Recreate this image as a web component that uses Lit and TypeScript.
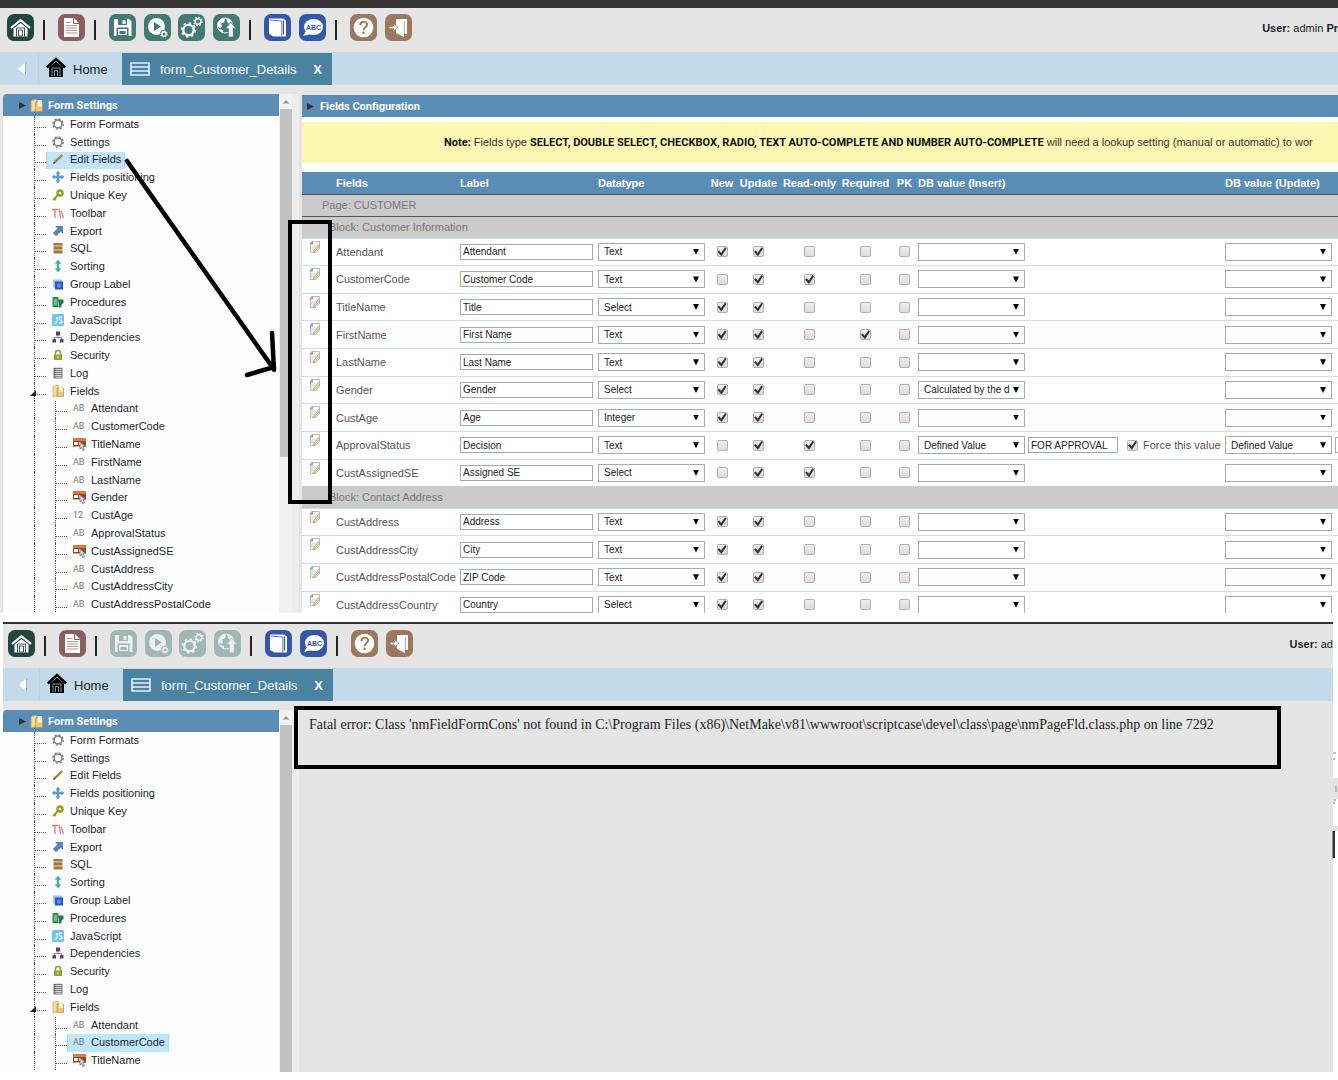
import { LitElement, html, css, svg, nothing } from "lit";
import { customElement, property } from "lit/decorators.js";
import { classMap } from "lit/directives/class-map.js";

const ROW_PITCH = 17.78;

/* ---------- toolbar glyphs, drawn on a 27 x 27 tile ---------- */
const toolGlyphs: Record<string, unknown> = {
  home: svg`<path d="M4 14 13.500 6.200 23 14" fill="none" stroke="#fff" stroke-width="2.200"/>
    <path d="M6.500 14.500 13.500 9 20.500 14.500V22.500h-14z" fill="#fff"/>
    <path d="M9.500 22.500v-8.500h8v8.500M11.500 22v-6h4v6z" fill="none" stroke="#24463f" stroke-width=".9"/>`,
  page: svg`<path d="M6 4h10l5 5v14H6z" fill="#fff"/><path d="M15.500 4v5.500H21" fill="none" stroke="#8a5f60"/>
    <path d="M8 11.500h11M8 14h11M8 16.500h11M8 19h11M8 8.500h5" stroke="#b98f8f" stroke-width="1"/>`,
  save: svg`<path d="M5 5h15l2.500 2.500V22H5z" fill="#fff"/><path d="M9 5h9v6H9z" fill="#437a73"/><path d="M13.500 6h3v4h-3z" fill="#fff"/>
    <path d="M7.500 13.500h12V22h-12z" fill="#437a73"/><path d="M9 15h9v6H9z" fill="#fff"/><path d="M10.500 17h6v3h-6z" fill="#437a73"/>`,
  run: svg`<circle cx="12.500" cy="12.500" r="8.500" fill="#fff"/><path d="M10 8v9l7-4.500z" fill="#437a73"/>
    <circle cx="20" cy="20" r="4.200" fill="#437a73"/><circle cx="20" cy="20" r="2.200" fill="none" stroke="#fff" stroke-width="1.400"/>
    <circle cx="20" cy="20" r="3.200" fill="none" stroke="#fff" stroke-width="1" stroke-dasharray="1.200 1.300"/>`,
  gears: svg`<circle cx="10.500" cy="16" r="5.200" fill="none" stroke="#fff" stroke-width="2.200"/>
    <circle cx="10.500" cy="16" r="6.900" fill="none" stroke="#fff" stroke-width="1.600" stroke-dasharray="2.600 2.820"/>
    <circle cx="20" cy="7.500" r="2.800" fill="none" stroke="#fff" stroke-width="1.500"/>
    <circle cx="20" cy="7.500" r="4.100" fill="none" stroke="#fff" stroke-width="1.200" stroke-dasharray="1.600 1.620"/>`,
  publish: svg`<circle cx="12" cy="11.500" r="7.500" fill="none" stroke="#fff" stroke-width="1"/>
    <path d="M5 9l4-4.500 3 1-1 3-3 1 1 3-2 2-2-2zM13 4l5 2 1.500 4-3 .5-2-2zM6 15l4 1v3.500z" fill="#fff"/>
    <path d="M17.800 8l5.200 6.500h-2.700V23h-5v-8.500h-2.700z" fill="#fff" stroke="#437a73" stroke-width=".8"/>`,
  book: svg`<path d="M5 4.500h14l3 2v16H9.500L5 20z" fill="#fff"/><path d="M19.500 6.500v14" stroke="#3c5aa4" stroke-width="1.200"/>
    <path d="M5.500 6 17.800 7v15.500" fill="none" stroke="#3c5aa4" stroke-width=".8"/>`,
  abc: svg`<ellipse cx="14.500" cy="13" rx="9.500" ry="8" fill="#fff"/><path d="M7 17 4 22l8-2z" fill="#fff"/>
    <text x="14.500" y="16" text-anchor="middle" font-size="7" font-weight="700" font-family="Liberation Sans, Arial, sans-serif" fill="#3c5aa4">ABC</text>`,
  help: svg`<circle cx="13.500" cy="13.500" r="9.800" fill="#fff"/>
    <path d="M10.300 11.200c0-4.600 6.700-4.600 6.700-.6 0 2.600-3.300 2.500-3.300 5.600" fill="none" stroke="#9c7860" stroke-width="1.900"/><circle cx="13.600" cy="18.800" r="1.200" fill="#9c7860"/>`,
  exit: svg`<path d="M11 9V5h11v15h-3" fill="#fff"/><path d="M11 5l8 3v15l-8-4z" fill="#fff"/><path d="M19.300 7v14" stroke="#9c7860" stroke-width=".7"/>
    <path d="M4 12.300h4.500V9.500l4.500 4-4.500 4v-2.800H4z" fill="#fff" stroke="#9c7860" stroke-width=".8"/>`,
};

interface Tool { glyph: string; label: string; tone: string; dims?: boolean }
const toolGroups: Tool[][] = [
  [{ glyph: "home", label: "Home", tone: "dark" }],
  [{ glyph: "page", label: "New application", tone: "red" }],
  [
    { glyph: "save", label: "Save", tone: "green", dims: true },
    { glyph: "run", label: "Run", tone: "green", dims: true },
    { glyph: "gears", label: "Generate", tone: "green", dims: true },
    { glyph: "publish", label: "Publish", tone: "green", dims: true },
  ],
  [
    { glyph: "book", label: "Manual", tone: "blue" },
    { glyph: "abc", label: "Dictionary", tone: "blue" },
  ],
  [
    { glyph: "help", label: "Help", tone: "brown" },
    { glyph: "exit", label: "Exit", tone: "brown" },
  ],
];

/* ---------- tree glyphs, drawn on a 12 x 12 tile ---------- */
const gear = svg`<circle cx="6" cy="6" r="4" fill="none" stroke="#777" stroke-width="1.500"/>
  <circle cx="6" cy="6" r="5.200" fill="none" stroke="#777" stroke-width="1.300" stroke-dasharray="2 2.080"/>`;
const folder = svg`<path d="M1 1.500 6 0v10.500L1 12z" fill="#f4dfa0" stroke="#c4a565" stroke-width=".7"/>
  <path d="M5 3h6.500v8.500H5z" fill="#e9c777" stroke="#b8924b" stroke-width=".7"/><path d="M7 1h4v6H7z" fill="#faf0cd"/>`;
const treeGlyphs: Record<string, unknown> = {
  gear,
  folder,
  pencil: svg`<path d="M1 11l1.200-3L9.500 1.200 11 2.700 4 9.800z" fill="#a98243"/><path d="M1 11l1-2.500L3.500 10z" fill="#444"/>`,
  move: svg`<path d="M6 0l2 2.500H7V5h2.500V4L12 6 9.500 8V7H7v2.500h1L6 12 4 9.500h1V7H2.500v1L0 6l2.500-2v1H5V2.500H4z" fill="#5f9ac4" stroke="#5f9ac4" stroke-width=".5"/>`,
  key: svg`<circle cx="8" cy="4" r="2.500" fill="none" stroke="#9a9a22" stroke-width="2.400"/><path d="M6 6 1 11M2.500 9.500 4 11" stroke="#9a9a22" stroke-width="1.800"/>`,
  tools: svg`<path d="M0 2.500h6M3 2.500V11M7 1.500l1.500 9.500M9 4l2.500 7" fill="none" stroke="#dd7f7f" stroke-width="1.300"/>`,
  export: svg`<path d="M3 1h8v8L8.500 6.800 4 11.200.8 8 5.300 3.500z" fill="#5487b8"/>`,
  sql: svg`<path d="M1.500 1h9v2.500h-9zM1.500 5h9v2.500h-9zM1.500 9h9v2.500h-9z" fill="#a4763d"/><path d="M1.500 3.500h9V5h-9zM1.500 7.500h9V9h-9z" fill="#c9a36f"/>`,
  sort: svg`<path d="M6 0l3 3.500H7v5h2L6 12 3 8.500h2v-5H3z" fill="#35b2a8" stroke="#35b2a8" stroke-width=".4"/>`,
  group: svg`<path d="M1 1.500h9v8H1z" fill="#a8c3ee"/><path d="M3 3.500h8v8H3z" fill="#2458c6"/><path d="M5 5.500h4v4H5z" fill="#5a8cf0"/>`,
  proc: svg`<path d="M.5 1h6v10h-6z" fill="#2f8f5c"/><path d="M2 4h3M2 6h3M2 8h3" stroke="#bfe3cf"/><path d="M6 3.500h5.500V7L9.500 8.500V11.500H7V7z" fill="#24774b"/>`,
  js: svg`<rect width="12" height="12" rx="1.500" fill="#6fc7ec"/><path d="M5 3v5q0 1.500-2.500 1M10 3.500q-3-1-3 .8 0 1.200 1.500 1.500Q10 6.200 10 7.700q0 1.600-3.200.9" fill="none" stroke="#fff" stroke-width="1.200"/>`,
  deps: svg`<path d="M4 .5h4v4H4zM.5 8h3.500v3.500H.5zM8 8h3.500v3.500H8z" fill="#5c3f6d"/><path d="M6 4v2.500M2.300 8.500V6.500h7.400v2" fill="none" stroke="#8a7a96"/>`,
  lock: svg`<path d="M3.500 6V4a2.500 2.500 0 0 1 5 0v2" fill="none" stroke="#86a834" stroke-width="1.500"/><path d="M2 5.500h8V11H2z" fill="#86a834"/><path d="M6 7v2.500" stroke="#fff"/>`,
  log: svg`<path d="M1.500.8h9v10.700h-9z" fill="#777"/><path d="M3.500 2.500h6M3.500 4.500h6M3.500 6.500h6M3.500 8.500h6M3.500 10.200h6" stroke="#ddd" stroke-width="1"/>`,
  select: svg`<path d="M0 0h13V8.500H0z" fill="#8d4a26"/><path d="M0 0h13V3H0z" fill="#e07a35"/><path d="M1 4h4v3H1zM6 4h2v3H6z" fill="#fff"/><path d="M7 4l5.500 4.500H10l1.500 3.500-1.800.5L8.500 9.500 7 11z" fill="#ddd" stroke="#666" stroke-width=".7"/>`,
};

interface Node { text: string; icon: string; deep?: boolean }
const settings: Node[] = [
  { text: "Form Formats", icon: "gear" },
  { text: "Settings", icon: "gear" },
  { text: "Edit Fields", icon: "pencil" },
  { text: "Fields positioning", icon: "move" },
  { text: "Unique Key", icon: "key" },
  { text: "Toolbar", icon: "tools" },
  { text: "Export", icon: "export" },
  { text: "SQL", icon: "sql" },
  { text: "Sorting", icon: "sort" },
  { text: "Group Label", icon: "group" },
  { text: "Procedures", icon: "proc" },
  { text: "JavaScript", icon: "js" },
  { text: "Dependencies", icon: "deps" },
  { text: "Security", icon: "lock" },
  { text: "Log", icon: "log" },
  { text: "Fields", icon: "folder" },
];
const fieldNodes: Node[] = (
  [
    ["Attendant", "AB"], ["CustomerCode", "AB"], ["TitleName", "select"], ["FirstName", "AB"],
    ["LastName", "AB"], ["Gender", "select"], ["CustAge", "12"], ["ApprovalStatus", "AB"],
    ["CustAssignedSE", "select"], ["CustAddress", "AB"], ["CustAddressCity", "AB"], ["CustAddressPostalCode", "AB"],
  ] as [string, string][]
).map(([text, icon]) => ({ text, icon, deep: true }));

/* ---------- field rows: name, label, datatype, ticks, insert value, update value ---------- */
interface Field { name: string; label: string; type: string; ticks: string; insert?: string; update?: string; value?: string }
const customerFields: Field[] = [
  { name: "Attendant", label: "Attendant", type: "Text", ticks: "11000" },
  { name: "CustomerCode", label: "Customer Code", type: "Text", ticks: "01100" },
  { name: "TitleName", label: "Title", type: "Select", ticks: "11000" },
  { name: "FirstName", label: "First Name", type: "Text", ticks: "11010" },
  { name: "LastName", label: "Last Name", type: "Text", ticks: "11000" },
  { name: "Gender", label: "Gender", type: "Select", ticks: "11000", insert: "Calculated by the d" },
  { name: "CustAge", label: "Age", type: "Integer", ticks: "11000" },
  { name: "ApprovalStatus", label: "Decision", type: "Text", ticks: "01100", insert: "Defined Value", update: "Defined Value", value: "FOR APPROVAL" },
  { name: "CustAssignedSE", label: "Assigned SE", type: "Select", ticks: "01100" },
];
const addressFields: Field[] = [
  { name: "CustAddress", label: "Address", type: "Text", ticks: "11000" },
  { name: "CustAddressCity", label: "City", type: "Text", ticks: "11000" },
  { name: "CustAddressPostalCode", label: "ZIP Code", type: "Text", ticks: "11000" },
  { name: "CustAddressCountry", label: "Country", type: "Select", ticks: "11000" },
];
const tickNames = ["New", "Update", "Read-only", "Required", "PK"];

@customElement("tool-bar")
class ToolBar extends LitElement {
  @property({ type: Boolean }) dimmed = false;
  @property() user = "";
  @property() project = "";

  static styles = css`
    :host { display: flex; flex: none; align-items: center; height: 44px; padding-left: var(--tools-inset); box-sizing: border-box; background: #e5e5e5; overflow: hidden; }
    .group { display: flex; flex: none; justify-content: space-between; padding-bottom: 5px; }
    .wide { width: 131px; }
    .pair { width: 62px; }
    .sep { flex: none; width: 2px; height: 20px; margin: 0 13px 0 9px; background: #222; }
    .tool { flex: none; display: block; width: 27px; height: 27px; margin: 0; padding: 0; border: 0; border-radius: 7px; }
    .tool svg { display: block; width: 27px; height: 27px; }
    .dark { background: #24463f; }
    .red { background: #8a5f60; }
    .green { background: #437a73; }
    .blue { background: #3557a7; }
    .brown { background: #9c7860; }
    .dim { opacity: 0.42; }
    .user { flex: none; margin-left: auto; padding-bottom: 4px; white-space: nowrap; font-size: 11px; color: #222; }
  `;

  render() {
    return html`
      ${toolGroups.map(
        (group, i) => html`
          ${i ? html`<span class="sep"></span>` : nothing}
          <div class=${classMap({ group: true, wide: group.length === 4, pair: group.length === 2 })}>
            ${group.map(
              (t) => html`<button class="tool ${t.tone} ${this.dimmed && t.dims ? "dim" : ""}" aria-label=${t.label} ?disabled=${this.dimmed && !!t.dims}>
                <svg viewBox="0 0 27 27" aria-hidden="true">${toolGlyphs[t.glyph]}</svg>
              </button>`
            )}
          </div>
        `
      )}
      <div class="user"><b>User:</b> ${this.user} <b>${this.project}</b></div>
    `;
  }
}

@customElement("tab-bar")
class TabBar extends LitElement {
  static styles = css`
    :host { display: flex; flex: none; height: 33px; box-sizing: border-box; background: #c3daea; border-top: 1px solid #cdd5da; font-size: 13px; }
    button, a { font: inherit; }
    .back { box-sizing: border-box; width: var(--back-width); padding: 0 12px 0 0; border: 0; border-right: 1px solid #b9d2e3; background: none; }
    .back svg { display: block; width: 12px; height: 14px; margin-left: auto; }
    .tab { display: flex; align-items: center; text-decoration: none; white-space: nowrap; }
    .home { width: 76px; padding-left: 7px; gap: 7px; color: #222; }
    .home svg { width: 20px; height: 20px; margin-bottom: 4px; }
    .active { width: 202px; padding-left: 8px; background: #4a82a1; color: #fff; }
    .active svg { width: 20px; height: 14px; margin-right: 10px; }
    .close { margin-left: auto; padding: 0 10px 0 0; border: 0; background: none; color: #fff; font-weight: 700; }
  `;

  render() {
    return html`
      <button class="back" aria-label="Previous tab">
        <svg viewBox="0 0 12 14"><path d="M11 1v12L4 7z" fill="#fff" /><path d="M11.500 1v12" stroke="#9ab" /></svg>
      </button>
      <a class="tab home" href="#home">
        <svg viewBox="0 0 20 20" aria-hidden="true">
          <path d="M.8 10.500 10 2l9.200 8.500" fill="none" stroke="#000" stroke-width="2.600" />
          <path d="M3 10.500 10 4.500l7 6V20H3z" fill="#000" />
          <path d="M6 19v-8h8v8M8.500 19v-5.500h3V19" fill="none" stroke="#8fa5b3" stroke-width=".9" />
        </svg>
        <span>Home</span>
      </a>
      <div class="tab active">
        <svg viewBox="0 0 20 14" aria-hidden="true"><path d="M1 1h18v12H1zM1 5h18M1 9h18" fill="none" stroke="#e6f0f5" stroke-width="1.600" /></svg>
        <span>form_Customer_Details</span>
        <button class="close" aria-label="Close tab">X</button>
      </div>
    `;
  }
}

@customElement("settings-tree")
class SettingsTree extends LitElement {
  @property() selected = "";
  @property({ type: Number }) depth = 12;
  @property({ type: Boolean }) short = false;

  static styles = css`
    :host { display: flex; flex: none; width: 296px; margin-left: var(--tree-inset); font-size: 11px; color: #251f30; overflow: hidden; }
    .panel { flex: 1; background: #fefefe; overflow: hidden; border-top-left-radius: 4px; }
    .head { display: flex; align-items: center; height: 22px; padding-left: 15px; background: #5a8db6; color: #fff; font-family: Roboto, "Liberation Sans", sans-serif; font-weight: 700; }
    .head .arrow { width: 9px; height: 9px; margin-right: 3px; }
    .head .folder { width: 13px; height: 13px; margin-right: 5px; }
    .list { display: grid; grid-auto-rows: 1fr; margin: 0; padding: 0 0 0 31px; list-style: none; }
    .item { position: relative; display: flex; align-items: center; border-left: 1px dotted #555; }
    .dash { flex: none; width: 11px; margin-top: 5px; border-top: 1px dotted #555; }
    .open { position: absolute; left: -5px; width: 6px; height: 6px; margin-top: 3px; }
    .node { display: flex; align-items: center; height: 100%; box-sizing: border-box; padding: 0 3px 2px 5px; border: 1px solid transparent; border-width: 0 1px; color: inherit; text-decoration: none; white-space: nowrap; }
    .node.on { background: #bee7fb; border-color: #a9d9f0; border-radius: 1px; }
    .icon { width: 12px; height: 12px; margin-right: 6px; flex: none; overflow: visible; }
    .branch { display: flex; height: 100%; align-items: center; margin-left: 20px; border-left: 1px dotted #555; }
    .tag { width: 12px; margin-right: 6px; font-family: Roboto, "Liberation Sans", sans-serif; font-size: 9px; color: #777; }
    .track { flex: none; width: 13px; background: #f1f1f1; display: flex; flex-direction: column; align-items: stretch; padding-left: 1px; box-sizing: border-box; }
    .gutter { flex: none; width: 7px; background: #ededed; }
    .up { height: 15px; flex: none; display: block; }
    .thumb { flex: 1; background: #c1c1c1; }
    .rest { flex: none; height: 30%; }
  `;

  private node(n: Node) {
    const glyph = treeGlyphs[n.icon];
    return html`<a class="node ${n.text === this.selected ? "on" : ""}" href="#${n.text}">
      ${glyph ? html`<svg class="icon" viewBox="0 0 12 12" aria-hidden="true">${glyph}</svg>` : html`<span class="tag">${n.icon}</span>`}
      <span>${n.text}</span>
    </a>`;
  }

  render() {
    const nodes = [...settings, ...fieldNodes.slice(0, this.depth)];
    return html`
      <div class="panel">
        <div class="head">
          <svg class="arrow" viewBox="0 0 9 9"><path d="M1 1v7l7-3.500z" fill="#333" /></svg>
          <svg class="folder" viewBox="0 0 12 12">${folder}</svg>
          <span>Form Settings</span>
        </div>
        <ul class="list" style="height:${Math.round(nodes.length * ROW_PITCH)}px">
          ${nodes.map(
            (n) => html`<li class="item">
              ${n.text === "Fields" ? html`<svg class="open" viewBox="0 0 6 6"><path d="M6 0v6H0z" fill="#222" /></svg>` : nothing}
              ${n.deep ? html`<div class="branch"><span class="dash"></span>${this.node(n)}</div>` : html`<span class="dash"></span>${this.node(n)}`}
            </li>`
          )}
        </ul>
      </div>
      <div class="track">
        <svg class="up" viewBox="0 0 12 15"><path d="M2.500 9.500h7L6 6z" fill="#999" /></svg>
        <div class="thumb"></div>
        ${this.short ? html`<div class="rest"></div>` : nothing}
      </div>
      <div class="gutter"></div>
    `;
  }
}

@customElement("field-table")
class FieldTable extends LitElement {
  static styles = css`
    :host { display: block; flex: 1; min-width: 0; margin-left: 3px; background: #fff; overflow: hidden; font-size: 11px; color: #555; }
    .title { display: flex; align-items: center; gap: 5px; height: 22px; margin: 0; padding-left: 4px; background: #5a8db6; border-top: 1px solid #e5e5e5; color: #fff; font-family: Roboto, "Liberation Sans", sans-serif; font-size: 11px; }
    .title svg { width: 9px; height: 9px; }
    .note { height: 41px; margin: 5px 0 9px; padding-left: 142px; background: #fcf8b4; line-height: 41px; white-space: nowrap; color: #333; }
    .note b { font-family: Roboto, "Liberation Sans", sans-serif; color: #111; }
    table { width: 100%; border-collapse: collapse; table-layout: fixed; }
    th, td { padding: 0 2px; text-align: left; white-space: nowrap; }
    thead th { height: 22px; background: #5a8db6; color: #fff; border-bottom: 1px solid #555; box-sizing: border-box; }
    .c-icon { width: 32px; } .c-field { width: 124px; } .c-label { width: 138px; } .c-type { width: 112px; }
    .c-new { width: 28px; } .c-update { width: 45px; } .c-read { width: 57px; } .c-req { width: 55px; } .c-pk { width: 23px; } .c-insert { width: 307px; }
    .tick { padding: 0; text-align: center; }
    .band th { height: 22px; box-sizing: border-box; background: #cbcbcb; font-weight: 400; color: #777; }
    .page th { padding-left: 20px; border-bottom: 1px solid #555; }
    .block th { padding-left: 27px; }
    .nine { height: 248px; }
    .four { height: 110px; }
    .row td { border-top: 1px solid #cfdeea; }
    .row .edit { vertical-align: top; }
    .edit button { display: block; margin: 1px 0 0 4px; padding: 0; border: 0; background: none; }
    .edit svg { display: block; width: 13px; height: 14px; }
    .text { box-sizing: border-box; height: 16px; width: 133px; padding: 0 2px; border: 1px solid #a9a9a9; background: #fff; font: 10px "Liberation Sans", Arial, sans-serif; color: #222; }
    .value { width: 90px; }
    input, select { margin: 0; vertical-align: middle; }
    .pick { display: inline-grid; width: 107px; vertical-align: middle; align-items: center; }
    .pick::after { content: ""; grid-area: 1 / 1; justify-self: end; width: 6px; height: 6px; margin-right: 6px; background: #000; clip-path: polygon(0 0, 100% 0, 50% 100%); pointer-events: none; }
    select { grid-area: 1 / 1; appearance: none; box-sizing: border-box; width: 107px; height: 18px; padding: 0 13px 0 5px; border: 1px solid #a9a9a9; border-radius: 0; background: #fff; font: 10px "Liberation Sans", Arial, sans-serif; color: #222; text-overflow: clip; }
    .check { appearance: none; display: grid; box-sizing: border-box; width: 11px; height: 11px; border: 1px solid #b0b0b0; border-radius: 2px; background: linear-gradient(#eee, #dcdcdc); }
    .tick .check { margin: 0 auto; }
    .check:checked::before { content: ""; width: 9px; height: 9px; background: #333; clip-path: polygon(0 50%, 20% 36%, 40% 62%, 84% 0, 100% 14%, 44% 100%); }
    .values { display: flex; align-items: center; gap: 3px; }
    .force { display: flex; align-items: center; gap: 5px; margin-left: 6px; font-size: 11px; }
    .clip { overflow: hidden; }
  `;

  private pick(name: string, value = "") {
    return html`<span class="pick"><select aria-label=${name}><option>${value}</option></select></span>`;
  }

  private row(f: Field) {
    return html`<tr class="row">
      <td class="edit">
        <button aria-label="Edit ${f.name}">
          <svg viewBox="0 0 13 14" aria-hidden="true">
            <path d="M3.500 1.500h8v7l-4 4h-5V4z" fill="#f4f5f7" stroke="#a9adb5" stroke-width=".8" />
            <path d="M1.500 3.500 5 1v3.500H2z" fill="#9aa2ae" /><path d="M3 7h5M3 9h3" stroke="#c8ccd4" stroke-width=".8" />
            <path d="M5 11.500 10.500 4.500l1.500 1.200-5.500 6.500z" fill="#f0dc9a" stroke="#b59a55" stroke-width=".7" />
          </svg>
        </button>
      </td>
      <td>${f.name}</td>
      <td><input class="text" type="text" aria-label="${f.name} label" .value=${f.label} /></td>
      <td>${this.pick(`${f.name} datatype`, f.type)}</td>
      ${tickNames.map((t, i) => html`<td class="tick"><input class="check" type="checkbox" aria-label="${f.name} ${t}" .checked=${f.ticks[i] === "1"} /></td>`)}
      <td>
        <div class="values">
          ${this.pick(`${f.name} insert value`, f.insert)}
          ${f.value
            ? html`<input class="text value" type="text" aria-label="${f.name} inserted text" .value=${f.value} />
                <label class="force"><input class="check" type="checkbox" .checked=${true} />Force this value</label>`
            : nothing}
        </div>
      </td>
      <td class="clip">
        <div class="values">
          ${this.pick(`${f.name} update value`, f.update)}
          ${f.value ? html`<input class="text value" type="text" aria-label="${f.name} updated text" />` : nothing}
        </div>
      </td>
    </tr>`;
  }

  render() {
    return html`
      <h2 class="title"><svg viewBox="0 0 9 9"><path d="M1 1v7l7-3.500z" fill="#333" /></svg>Fields Configuration</h2>
      <p class="note">
        <b>Note:</b> Fields type <b>SELECT, DOUBLE SELECT, CHECKBOX, RADIO, TEXT AUTO-COMPLETE AND NUMBER AUTO-COMPLETE</b> will need a lookup setting (manual or automatic) to wor
      </p>
      <table>
        <thead>
          <tr>
            <th class="c-icon"></th><th class="c-field">Fields</th><th class="c-label">Label</th><th class="c-type">Datatype</th>
            <th class="c-new tick">New</th><th class="c-update tick">Update</th><th class="c-read tick">Read-only</th>
            <th class="c-req tick">Required</th><th class="c-pk tick">PK</th><th class="c-insert">DB value (Insert)</th><th>DB value (Update)</th>
          </tr>
        </thead>
        <tbody>
          <tr class="band page"><th colspan="11">Page: CUSTOMER</th></tr>
          <tr class="band block"><th colspan="11">Block: Customer Information</th></tr>
        </tbody>
        <tbody class="nine">${customerFields.map((f) => this.row(f))}</tbody>
        <tbody><tr class="band block"><th colspan="11">Block: Contact Address</th></tr></tbody>
        <tbody class="four">${addressFields.map((f) => this.row(f))}</tbody>
      </table>
    `;
  }
}

@customElement("app-root")
class AppRoot extends LitElement {
  static styles = css`
    :host { display: flex; flex-direction: column; gap: 9px; height: 100vh; padding-bottom: 8px; box-sizing: border-box; background: #fff; font-family: "Liberation Sans", Arial, sans-serif; overflow: hidden; position: relative; }
    .shot { position: relative; display: flex; flex-direction: column; min-height: 0; overflow: hidden; background: #e5e5e5; }
    .first { flex: 613 1 0; --tools-inset: 7px; --back-width: 39px; --tree-inset: 3px; }
    .second { flex: 450 1 0; margin: 0 5px 0 3px; --tools-inset: 5px; --back-width: 37px; --tree-inset: 0px; }
    .strip { flex: none; height: 8px; background: #333; }
    .second .strip { height: 2px; }
    .work { display: flex; flex: 1; min-height: 0; padding-top: 9px; overflow: hidden; }
    .message { flex: 1; min-width: 0; margin: 0; padding: 6px 0 0 10px; font: 14px/18px "Liberation Serif", "Times New Roman", serif; color: #222; white-space: nowrap; }
    .mark { position: absolute; box-sizing: border-box; border: 4px solid #000; pointer-events: none; }
    .column-mark { left: 288px; top: 220px; width: 44px; height: 284px; }
    .error-mark { left: 291px; right: 52px; top: 84px; height: 63px; }
    .arrow { position: absolute; left: 120px; top: 150px; width: 170px; height: 240px; pointer-events: none; }
    .edge { position: absolute; right: 0; top: 750px; width: 6px; height: 112px; }
  `;

  render() {
    return html`
      <section class="shot first">
        <div class="strip"></div>
        <tool-bar user="admin" project="Pr"></tool-bar>
        <tab-bar></tab-bar>
        <div class="work">
          <settings-tree selected="Edit Fields" short></settings-tree>
          <field-table></field-table>
        </div>
        <div class="mark column-mark"></div>
        <svg class="arrow" viewBox="0 0 170 240" aria-hidden="true">
          <path d="M7 11 153 218M152 183l2 37M127 225l27-8" fill="none" stroke="#000" stroke-width="4.500" stroke-linecap="round" />
        </svg>
      </section>
      <section class="shot second">
        <div class="strip"></div>
        <tool-bar dimmed user="ad"></tool-bar>
        <tab-bar></tab-bar>
        <div class="work">
          <settings-tree selected="CustomerCode" depth="3"></settings-tree>
          <p class="message">Fatal error: Class 'nmFieldFormCons' not found in C:\\Program Files (x86)\\NetMake\\v81\\wwwroot\\scriptcase\\devel\\class\\page\\nmPageFld.class.php on line 7292</p>
        </div>
        <div class="mark error-mark"></div>
      </section>
      <svg class="edge" viewBox="0 0 6 112" aria-hidden="true">
        <path d="M1 3h3M1 9h2M1 50h3M1 53h2" stroke="#888" /><path d="M1 28h5v21H1zM1 76h5v5H1z" fill="#e3e3e3" /><path d="M4 36v6" stroke="#888" /><path d="M.5 81h2.500v27H.5z" fill="#333" />
      </svg>
    `;
  }
}
